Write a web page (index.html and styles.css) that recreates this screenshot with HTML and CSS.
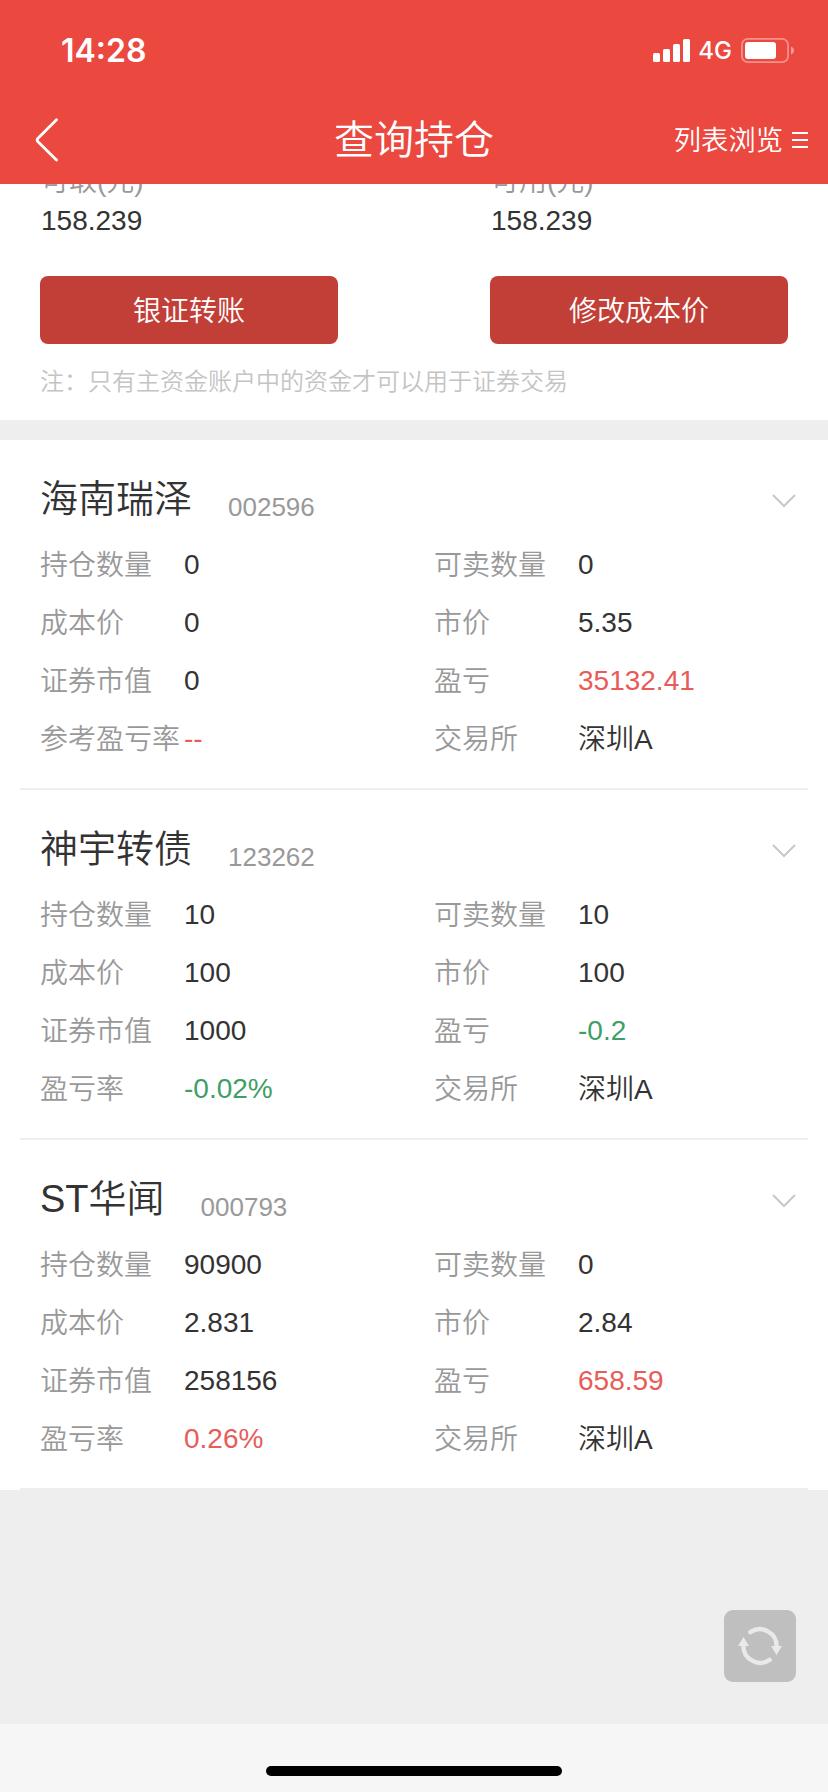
FILE: index.html
```html
<!DOCTYPE html>
<html lang="zh-CN">
<head>
  <meta charset="UTF-8" />
  <meta name="viewport" content="width=device-width, initial-scale=1" />
  <title>查询持仓</title>
  <link rel="stylesheet" href="styles.css">
</head>
<body>

  <header class="header">
    <div class="status-bar">
      <span class="time">14:28</span>
      <div class="status-icons">
        <svg class="signal" width="37" height="23" viewBox="0 0 37 23" fill="#fff">
          <rect x="0" y="14" width="7" height="9" rx="1.5" />
          <rect x="10" y="10" width="7" height="13" rx="1.5" />
          <rect x="20" y="5" width="7" height="18" rx="1.5" />
          <rect x="30" y="0" width="7" height="23" rx="1.5" />
        </svg>
        <span class="network">4G</span>
        <svg class="battery" width="53" height="25" viewBox="0 0 53 25">
          <rect x="0.9" y="0.9" width="46.2" height="23.2" rx="6" fill="none" stroke="#fff" stroke-opacity="0.4" stroke-width="1.8" />
          <rect x="4" y="4" width="31" height="17" rx="3" fill="#fff" />
          <path d="M50 8.5c4 1.4 4 6.6 0 8z" fill="#fff" fill-opacity="0.45" />
        </svg>
      </div>
    </div>
    <div class="nav-bar">
      <svg class="back" width="24" height="44" viewBox="0 0 24 44" fill="none" stroke="#fff" stroke-width="2.8" stroke-linecap="round" stroke-linejoin="round">
        <path d="M21.5 1.8L3 20.2Q1.2 22 3 23.8L21.5 42" />
      </svg>
      <h1>查询持仓</h1>
      <div class="view-mode">
        <span>列表浏览</span>
        <svg width="16" height="18" viewBox="0 0 16 18" stroke="#fff" stroke-width="2">
          <path d="M0 2h16M0 9h16M0 16h16" />
        </svg>
      </div>
    </div>
  </header>

  <main class="content">
    <section class="summary">
      <div class="funds">
        <div class="fund"><span class="label">可取(元)</span><span>158.239</span></div>
        <div class="fund"><span class="label">可用(元)</span><span>158.239</span></div>
        <button class="btn">银证转账</button>
        <button class="btn">修改成本价</button>
      </div>
      <p class="note">注：只有主资金账户中的资金才可以用于证券交易</p>
    </section>

    <section class="positions">
      <article class="stock">
        <div class="stock-head">
          <h2>海南瑞泽</h2><span class="code">002596</span>
          <svg class="arrow" width="24" height="14" viewBox="0 0 24 14"><path d="M1 1L12 12L23 1" /></svg>
        </div>
        <dl>
          <dt>持仓数量</dt><dd>0</dd>
          <dt>可卖数量</dt><dd>0</dd>
          <dt>成本价</dt><dd>0</dd>
          <dt>市价</dt><dd>5.35</dd>
          <dt>证券市值</dt><dd>0</dd>
          <dt>盈亏</dt><dd class="up">35132.41</dd>
          <dt>参考盈亏率</dt><dd class="up">--</dd>
          <dt>交易所</dt><dd class="market">深圳A</dd>
        </dl>
      </article>

      <article class="stock">
        <div class="stock-head">
          <h2>神宇转债</h2><span class="code">123262</span>
          <svg class="arrow" width="24" height="14" viewBox="0 0 24 14"><path d="M1 1L12 12L23 1" /></svg>
        </div>
        <dl>
          <dt>持仓数量</dt><dd>10</dd>
          <dt>可卖数量</dt><dd>10</dd>
          <dt>成本价</dt><dd>100</dd>
          <dt>市价</dt><dd>100</dd>
          <dt>证券市值</dt><dd>1000</dd>
          <dt>盈亏</dt><dd class="down">-0.2</dd>
          <dt>盈亏率</dt><dd class="down">-0.02%</dd>
          <dt>交易所</dt><dd class="market">深圳A</dd>
        </dl>
      </article>

      <article class="stock">
        <div class="stock-head">
          <h2>ST华闻</h2><span class="code">000793</span>
          <svg class="arrow" width="24" height="14" viewBox="0 0 24 14"><path d="M1 1L12 12L23 1" /></svg>
        </div>
        <dl>
          <dt>持仓数量</dt><dd>90900</dd>
          <dt>可卖数量</dt><dd>0</dd>
          <dt>成本价</dt><dd>2.831</dd>
          <dt>市价</dt><dd>2.84</dd>
          <dt>证券市值</dt><dd>258156</dd>
          <dt>盈亏</dt><dd class="up">658.59</dd>
          <dt>盈亏率</dt><dd class="up">0.26%</dd>
          <dt>交易所</dt><dd class="market">深圳A</dd>
        </dl>
      </article>
    </section>
  </main>

  <button class="refresh" aria-label="刷新">
    <svg width="44" height="40" viewBox="0 0 44 40">
      <g fill="none" stroke="#e9e9e9" stroke-width="4.4" stroke-linecap="round">
        <path d="M12.3 6.1A16.9 16.9 0 0 1 38.6 20.5" />
        <path d="M31.7 33.9A16.9 16.9 0 0 1 5.4 19.5" />
      </g>
      <path d="M33 20h11l-5.5 9zM0 20h11l-5.5-9z" fill="#e9e9e9" />
    </svg>
  </button>

  <footer class="footer"><span class="home-bar"></span></footer>

</body>
</html>
```

FILE: styles.css
```css
* { box-sizing: border-box; margin: 0; padding: 0; }
body { display: flex; flex-direction: column; height: 1792px; font-family: "Liberation Sans", "Noto Sans CJK SC", sans-serif; font-size: 28px; font-weight: 350; color: #333; background: #eee; overflow: hidden; }
h1, h2 { font-weight: 350; }
svg { display: block; flex: none; }

.header { flex: none; height: 184px; background: #eb4840; color: #fff; }
.status-bar { display: flex; justify-content: space-between; height: 96px; padding: 4px 34px 0 61px; align-items: center; }
.time { padding-top: 1px; font-family: Inter, sans-serif; font-size: 32px; font-weight: 600; line-height: 40px; }
.status-icons { display: flex; align-items: center; }
.network { margin: 2px 9px 0 8px; font-family: Inter, sans-serif; font-size: 24px; font-weight: 500; line-height: 30px; }
.nav-bar { display: grid; grid-template-columns: 1fr auto 1fr; align-items: center; height: 88px; padding: 0 20px; }
.back { margin-left: 15px; }
.nav-bar h1 { font-size: 40px; line-height: 56px; }
.view-mode { display: flex; justify-content: flex-end; align-items: center; gap: 9px; font-size: 27.3px; line-height: 40px; }
.view-mode span { padding-top: 2px; }

.content { flex: 1; overflow: hidden; }
.summary { display: flow-root; height: 236px; padding: 0 40px; background: #fff; }
.funds { display: grid; grid-template-columns: 298px 298px; column-gap: 152px; row-gap: 36px; margin-top: -21px; }
.fund { display: flex; flex-direction: column; gap: 2px; height: 77px; line-height: 37px; }
.fund span { padding-left: 1px; }
.label { color: #999; }
.btn { height: 68px; padding-bottom: 2px; border: none; border-radius: 8px; background: #c23f38; color: #fff; font: inherit; }
.note { margin-top: 20px; font-size: 24px; line-height: 36px; color: #c4c4c4; }

.positions { margin-top: 20px; background: #fff; }
.stock { height: 350px; padding: 0 20px; }
.stock-head { display: flex; align-items: flex-start; height: 95px; padding: 31px 12px 0 20px; }
.stock-head h2 { font-size: 38px; line-height: 56px; }
.code { margin: 8px 0 0 36px; font-size: 26px; line-height: 56px; color: #999; }
.arrow { margin: 23px 0 0 auto; fill: none; stroke: #c8c8c8; stroke-width: 2; }
.stock dl { display: grid; grid-template-columns: 144px 250px 144px 1fr; grid-auto-rows: 58px; height: 255px; padding: 1px 0 0 20px; line-height: 58px; border-bottom: 2px solid #eee; }
.stock dt { padding-top: 1px; color: #999; white-space: nowrap; }
.stock .market { padding-top: 1px; }
.up { color: #e85c58; }
.down { color: #3f9e66; }

/* floats above the list */
.refresh { position: absolute; right: 32px; bottom: 110px; display: flex; align-items: center; justify-content: center; width: 72px; height: 72px; border: none; border-radius: 9px; background: #bfbfbf; }

.footer { flex: none; display: flex; justify-content: center; height: 68px; padding-top: 42px; background: #f6f6f6; }
.home-bar { width: 296px; height: 10px; border-radius: 5px; background: #000; }
```
